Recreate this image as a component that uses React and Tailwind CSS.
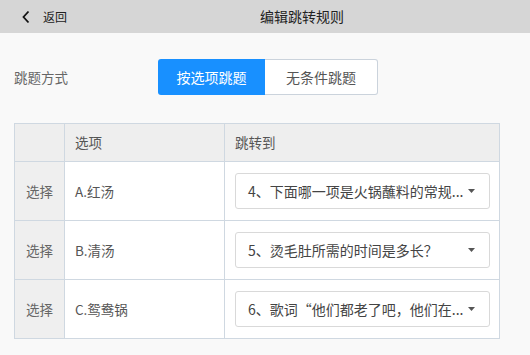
import React, { useState } from 'react';

const rows = [
  { option: 'A.红汤', target: '4、下面哪一项是火锅蘸料的常规...' },
  { option: 'B.清汤', target: '5、烫毛肚所需的时间是多长？' },
  { option: 'C.鸳鸯锅', target: '6、歌词“他们都老了吧，他们在...' },
];

const App = () => {
  const [mode, setMode] = useState('option');

  return (
    <div className="w-[530px] h-[355px] bg-[#f9f9f9] overflow-hidden" style={{ fontFamily: '"Noto Sans CJK SC", "Noto Sans", sans-serif' }}>
      <div className="h-[33px] bg-[#d6d6d6] flex items-center">
        <button className="flex items-center pl-[21px] text-[12px] text-[#222]">
          <svg width="10" height="14" viewBox="0 0 10 14" className="mr-[12px]">
            <path d="M7.5 1.5 L2.5 7 L7.5 12.5" fill="none" stroke="#111" strokeWidth="1.8" />
          </svg>
          返回
        </button>
        <div className="ml-[193px] text-[14px] text-[#222]">编辑跳转规则</div>
      </div>

      <div className="px-[14px] pt-[26px]">
        <div className="flex items-center h-[36px]">
          <div className="w-[144px] text-[13.5px] text-[#666]">跳题方式</div>
          <div className="flex h-[36px]">
            <button
              onClick={() => setMode('option')}
              className={`w-[107px] rounded-l-[3px] text-[14px] ${mode === 'option' ? 'bg-[#1890ff] text-white' : 'bg-white text-[#555] border border-[#cbd3dc]'}`}
            >
              按选项跳题
            </button>
            <button
              onClick={() => setMode('none')}
              className={`w-[113px] rounded-r-[3px] text-[14px] ${mode === 'none' ? 'bg-[#1890ff] text-white' : 'bg-white text-[#555] border border-l-0 border-[#cbd3dc]'}`}
            >
              无条件跳题
            </button>
          </div>
        </div>

        <table className="mt-[28px] w-[486px] border-collapse text-[13.5px] text-[#555]">
          <thead>
            <tr className="h-[38px] bg-[#eeeeee]">
              <th className="w-[50px] border border-[#cfd8e1]"></th>
              <th className="w-[160px] border border-[#cfd8e1] text-left font-normal pl-[10px]">选项</th>
              <th className="border border-[#cfd8e1] text-left font-normal pl-[10px]">跳转到</th>
            </tr>
          </thead>
          <tbody>
            {rows.map((row) => (
              <tr key={row.option} className="h-[59px]">
                <td className="border border-[#cfd8e1] bg-[#efefef] text-center text-[#666]">选择</td>
                <td className="border border-[#cfd8e1] bg-white pl-[10px]">{row.option}</td>
                <td className="border border-[#cfd8e1] bg-white pl-[10px]">
                  <div className="w-[255px] h-[36px] flex items-center justify-between border border-[#d9d9d9] rounded-[3px] bg-white pl-[12px] pr-[14px] text-[14px] text-[#444]">
                    <span className="whitespace-nowrap">{row.target}</span>
                    <svg width="7" height="4" viewBox="0 0 7 4" className="shrink-0">
                      <path d="M0 0 H7 L3.5 4 Z" fill="#555" />
                    </svg>
                  </div>
                </td>
              </tr>
            ))}
          </tbody>
        </table>
      </div>
    </div>
  );
};

export default App;
